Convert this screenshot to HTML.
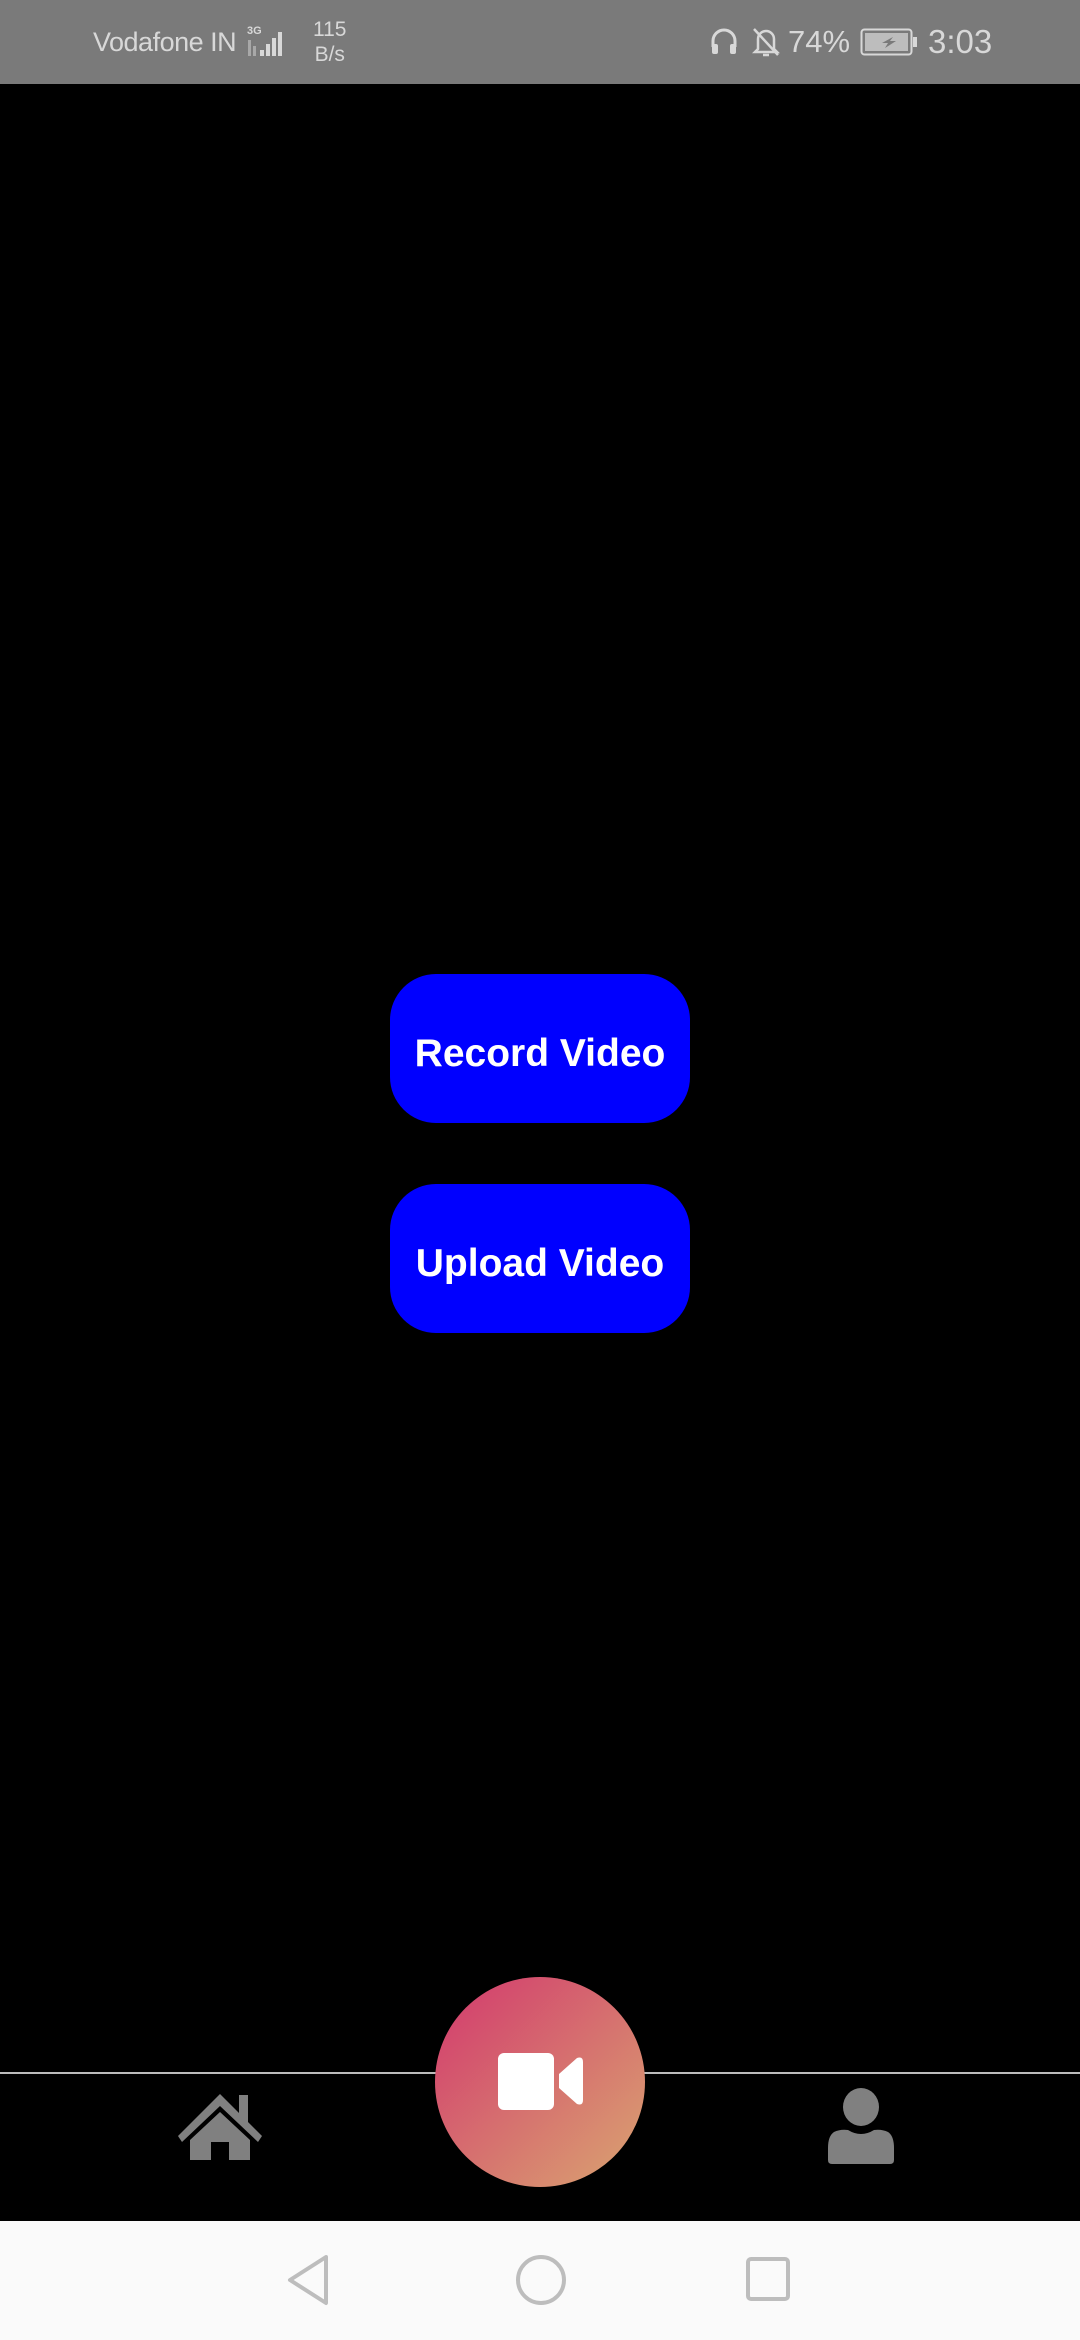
<!DOCTYPE html>
<html><head><meta charset="utf-8"><style>
html,body{margin:0;padding:0;background:#000;}
body{width:1080px;height:2340px;position:relative;overflow:hidden;font-family:"Liberation Sans",sans-serif;}
.status{position:absolute;left:0;top:0;width:1080px;height:84px;background:#7a7a7a;color:#d8d8d8;}
.btn{position:absolute;left:390px;width:300px;height:149px;background:#0000ff;border-radius:46px;color:#fff;font-weight:bold;font-size:39px;display:flex;align-items:center;justify-content:center;box-sizing:border-box;padding-top:10px;}
.line{position:absolute;left:0;top:2072px;width:1080px;height:2px;background:#bbb;}
.fab{position:absolute;left:435px;top:1977px;width:210px;height:210px;border-radius:50%;background:linear-gradient(135deg,#d3436e 10%,#d9a070 95%);}
.nav{position:absolute;left:0;top:2221px;width:1080px;height:119px;background:#fafafa;}
</style></head><body>
<div class="status">
<div style="position:absolute;left:93px;top:27px;font-size:27px;letter-spacing:-0.5px;">Vodafone IN</div>
<svg style="position:absolute;left:246px;top:24px" width="52" height="36" viewBox="0 0 52 36">
<text x="1" y="10" font-size="11" fill="#d8d8d8" font-family="Liberation Sans" font-weight="bold">3G</text>
<rect x="2" y="16" width="3" height="16" fill="#a8a8a8"/><rect x="7" y="22" width="3" height="10" fill="#a8a8a8"/>
<rect x="14" y="26" width="4" height="6" fill="#d8d8d8"/><rect x="20" y="20" width="4" height="12" fill="#d8d8d8"/><rect x="26" y="14" width="4" height="18" fill="#d8d8d8"/><rect x="32" y="8" width="4" height="24" fill="#d8d8d8"/>
</svg>
<div style="position:absolute;left:313px;top:17px;font-size:21px;line-height:25px;text-align:center;">115<br>B/s</div>
<svg style="position:absolute;left:709px;top:27px" width="30" height="30" viewBox="0 0 30 30"><path d="M4 20 V14 A11 11 0 0 1 26 14 V20" stroke="#d8d8d8" stroke-width="3" fill="none"/><rect x="3" y="17" width="6" height="10" rx="2" fill="#d8d8d8"/><rect x="21" y="17" width="6" height="10" rx="2" fill="#d8d8d8"/></svg>
<svg style="position:absolute;left:750px;top:25px" width="32" height="34" viewBox="0 0 32 34"><path d="M8 24 V14 A8 8 0 0 1 24 14 V24 L27 27 H5 Z" stroke="#d8d8d8" stroke-width="2.5" fill="none"/><path d="M13 30 H19" stroke="#d8d8d8" stroke-width="2.5"/><path d="M4 4 L28 30" stroke="#d8d8d8" stroke-width="2.5"/></svg>
<div style="position:absolute;left:788px;top:24px;font-size:31px;">74%</div>
<svg style="position:absolute;left:860px;top:28px" width="58" height="28" viewBox="0 0 58 28"><rect x="1.5" y="1.5" width="50" height="25" rx="3" stroke="#d8d8d8" stroke-width="2" fill="none"/><rect x="5" y="5" width="43" height="18" fill="#bdbdbd"/><rect x="53" y="9" width="4" height="10" fill="#d8d8d8"/><path d="M33 9 L22 15 H28 L25 20 L36 13 H30 Z" fill="#7a7a7a"/></svg>
<div style="position:absolute;left:928px;top:23px;font-size:33px;">3:03</div>
</div>
<div class="btn" style="top:974px">Record Video</div>
<div class="btn" style="top:1184px">Upload Video</div>
<div class="line"></div>
<div class="fab"></div>
<svg style="position:absolute;left:495px;top:2050px" width="92" height="64" viewBox="0 0 92 64"><rect x="3" y="3" width="56" height="57" rx="6" fill="#fff"/><path d="M64 24 L82 8 Q88 6 88 12 V50 Q88 56 82 54 L64 38 Z" fill="#fff"/></svg>
<svg style="position:absolute;left:176px;top:2092px" width="88" height="70" viewBox="0 0 88 70"><path d="M44 2 L2 44 L6 50 L44 14 L82 50 L86 44 L72 30 V3 H63 V21 Z" fill="#808080"/><path d="M14 48 L44 20 L74 48 V68 H53 V50 H35 V68 H14 Z" fill="#808080"/></svg>
<svg style="position:absolute;left:826px;top:2088px" width="70" height="78" viewBox="0 0 70 78"><ellipse cx="35" cy="19" rx="18" ry="19" fill="#808080"/><path d="M8 44 Q14 41 22 42 Q35 50 48 42 Q56 41 62 44 Q68 48 68 60 V72 Q68 76 64 76 H6 Q2 76 2 72 V60 Q2 48 8 44 Z" fill="#808080"/></svg>
<div class="nav">
<svg style="position:absolute;left:284px;top:32px" width="50" height="54" viewBox="0 0 50 54"><path d="M42 4 L6 27 L42 50 Z" stroke="#bdbdbd" stroke-width="4" fill="none" stroke-linejoin="round"/></svg>
<svg style="position:absolute;left:514px;top:32px" width="54" height="54" viewBox="0 0 54 54"><circle cx="27" cy="27" r="23" stroke="#bdbdbd" stroke-width="4" fill="none"/></svg>
<svg style="position:absolute;left:744px;top:34px" width="50" height="50" viewBox="0 0 50 50"><rect x="4" y="4" width="40" height="40" rx="3" stroke="#bdbdbd" stroke-width="4" fill="none"/></svg>
</div>
</body></html>
